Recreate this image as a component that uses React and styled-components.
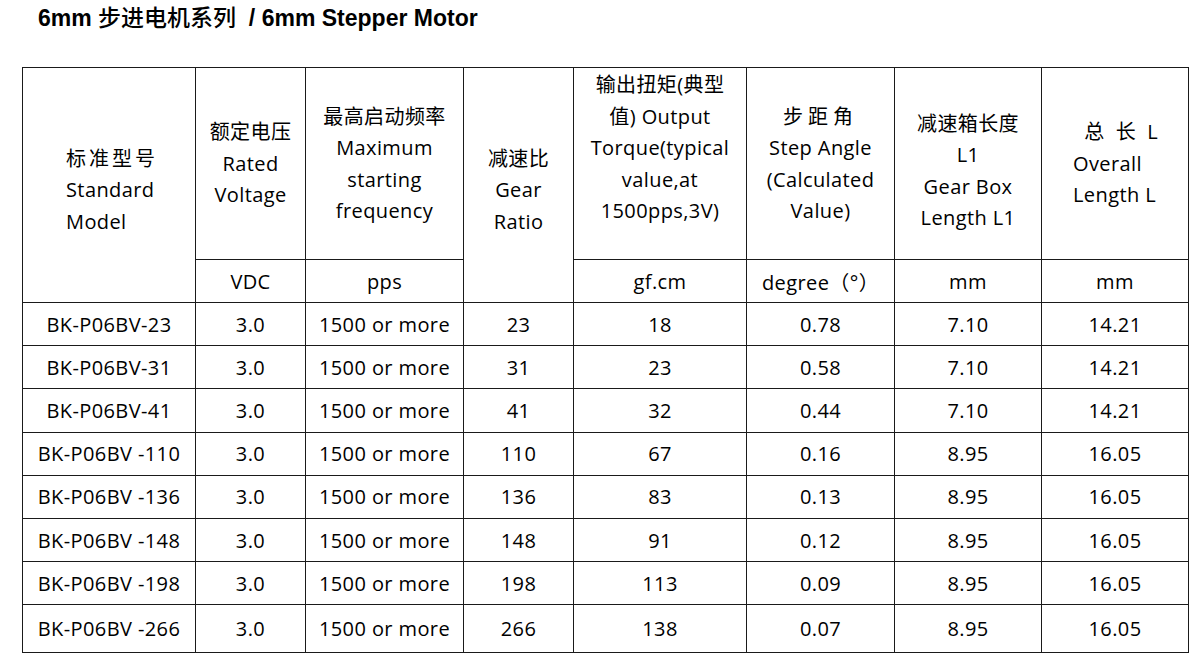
import React from "react";
import styled, { createGlobalStyle } from "styled-components";

const Global = createGlobalStyle`
  html, body { margin: 0; padding: 0; background: #fff; }
  body { font-family: "Open Sans", "Noto Sans CJK SC", sans-serif; color: #000; }
`;

const Page = styled.div`
  width: 1195px;
  height: 662px;
  overflow: hidden;
  padding: 0 0 0 22px;
  box-sizing: border-box;
`;

const Title = styled.h1`
  margin: 0;
  padding: 4px 0 0 16px;
  height: 67px;
  box-sizing: border-box;
  font-family: "Liberation Sans", "Noto Sans CJK SC", sans-serif;
  font-weight: 700;
  font-size: 23px;
  line-height: 24px;
  white-space: pre;
`;

const TitleCjk = styled.span`
  font-family: "Noto Sans CJK SC", sans-serif;
  font-weight: 500;
  line-height: 24px;
`;

const Table = styled.table`
  border-collapse: collapse;
  table-layout: fixed;
  width: 1167px;
  font-size: 20px;
  letter-spacing: 0.4px;
`;

const HeadCell = styled.th`
  border: 1px solid #1a1a1a;
  font-weight: 400;
  line-height: 31.5px;
  padding: ${(p) => p.$pad || "0"};
  text-align: ${(p) => p.$align || "center"};
  vertical-align: ${(p) => p.$valign || "middle"};
`;

const UnitCell = styled.th`
  border: 1px solid #1a1a1a;
  font-weight: 400;
  text-align: center;
  vertical-align: middle;
  padding: 0;
`;

const Cell = styled.td`
  border: 1px solid #1a1a1a;
  text-align: center;
  vertical-align: middle;
  padding: 0;
  white-space: nowrap;
`;

const HeadRow = styled.tr`
  height: ${(p) => p.$h}px;
`;

const DataRow = styled.tr`
  height: ${(p) => p.$h}px;
`;

const Spaced = styled.span`
  letter-spacing: ${(p) => p.$ls || "3px"};
`;

const rows = [
  ["BK-P06BV-23", "3.0", "1500 or more", "23", "18", "0.78", "7.10", "14.21"],
  ["BK-P06BV-31", "3.0", "1500 or more", "31", "23", "0.58", "7.10", "14.21"],
  ["BK-P06BV-41", "3.0", "1500 or more", "41", "32", "0.44", "7.10", "14.21"],
  ["BK-P06BV -110", "3.0", "1500 or more", "110", "67", "0.16", "8.95", "16.05"],
  ["BK-P06BV -136", "3.0", "1500 or more", "136", "83", "0.13", "8.95", "16.05"],
  ["BK-P06BV -148", "3.0", "1500 or more", "148", "91", "0.12", "8.95", "16.05"],
  ["BK-P06BV -198", "3.0", "1500 or more", "198", "113", "0.09", "8.95", "16.05"],
  ["BK-P06BV -266", "3.0", "1500 or more", "266", "138", "0.07", "8.95", "16.05"],
];

const widths = [173, 110, 158, 110, 173, 148, 147, 147];

export default function App() {
  return (
    <>
      <Global />
      <Page>
        <Title>
          {"6mm "}
          <TitleCjk>步进电机系列</TitleCjk>
          {"  / 6mm Stepper Motor"}
        </Title>
        <Table>
          <colgroup>
            {widths.map((w, i) => (
              <col key={i} style={{ width: w }} />
            ))}
          </colgroup>
          <thead>
            <HeadRow $h={192}>
              <HeadCell rowSpan={2} $align="left" $pad="10px 0 0 43px">
                <Spaced>标准型号</Spaced>
                <br />
                Standard
                <br />
                Model
              </HeadCell>
              <HeadCell>
                额定电压
                <br />
                Rated
                <br />
                Voltage
              </HeadCell>
              <HeadCell>
                最高启动频率
                <br />
                Maximum
                <br />
                starting
                <br />
                frequency
              </HeadCell>
              <HeadCell rowSpan={2} $pad="10px 0 0 0">
                减速比
                <br />
                Gear
                <br />
                Ratio
              </HeadCell>
              <HeadCell $valign="top" $pad="1px 0 0 0">
                输出扭矩(典型
                <br />
                值) Output
                <br />
                Torque(typical
                <br />
                value,at
                <br />
                1500pps,3V)
              </HeadCell>
              <HeadCell>
                <Spaced $ls="5px">步距角</Spaced>
                <br />
                Step Angle
                <br />
                (Calculated
                <br />
                Value)
              </HeadCell>
              <HeadCell $pad="14px 0 0 0">
                减速箱长度
                <br />
                L1
                <br />
                Gear Box
                <br />
                Length L1
              </HeadCell>
              <HeadCell $align="left" $pad="0 0 0 31px">
                {"\u00a0 总\u00a0 长\u00a0 L"}
                <br />
                Overall
                <br />
                Length L
              </HeadCell>
            </HeadRow>
            <HeadRow $h={43}>
              <UnitCell>VDC</UnitCell>
              <UnitCell>pps</UnitCell>
              <UnitCell>gf.cm</UnitCell>
              <UnitCell>degree（°）</UnitCell>
              <UnitCell>mm</UnitCell>
              <UnitCell>mm</UnitCell>
            </HeadRow>
          </thead>
          <tbody>
            {rows.map((r, i) => (
              <DataRow key={i} $h={i === rows.length - 1 ? 48 : 43.2}>
                {r.map((c, j) => (
                  <Cell key={j}>{c}</Cell>
                ))}
              </DataRow>
            ))}
          </tbody>
        </Table>
      </Page>
    </>
  );
}
